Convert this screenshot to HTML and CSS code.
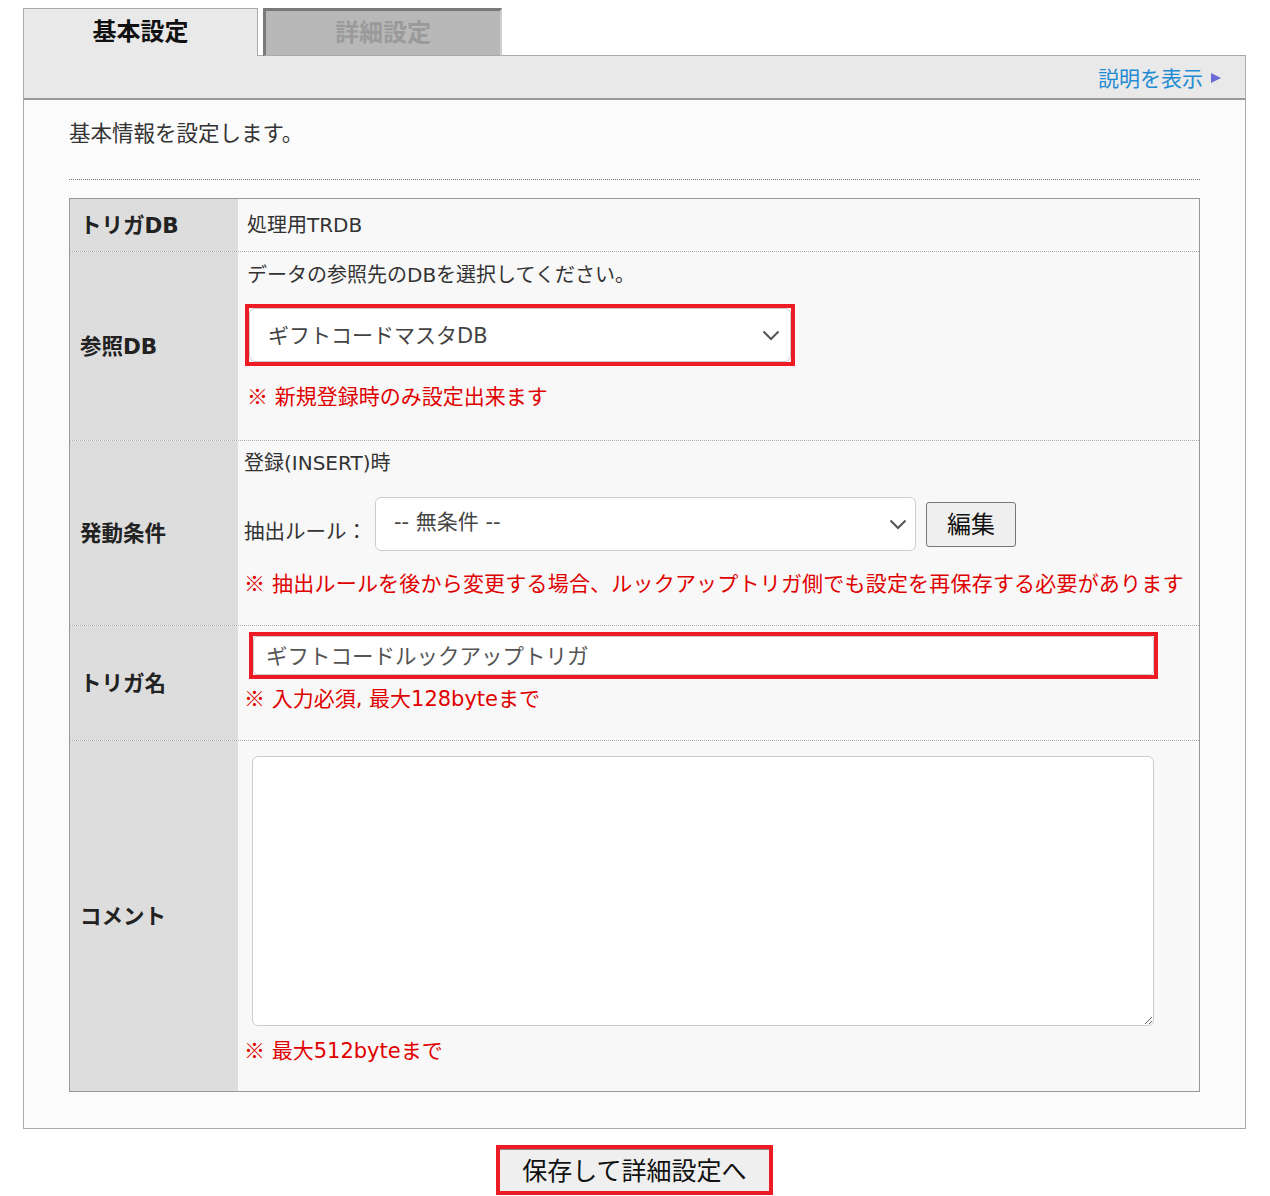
FILE: index.html
```html
<!DOCTYPE html>
<html lang="ja">
<head>
<meta charset="utf-8">
<title>基本設定</title>
<link rel="stylesheet" href="styles.css">
</head>
<body>
<div class="page">
  <div class="tabs">
    <div class="tab tab-active">基本設定</div>
    <div class="tab-gap"></div>
    <div class="tab tab-inactive">詳細設定</div>
    <div class="tab-fill"></div>
  </div>
  <div class="band">
    <a class="help-link" href="#">説明を表示<svg class="tri" width="12" height="12" viewBox="0 0 12 12"><polygon points="1,1 11,6 1,11" fill="#6a6ad8"/></svg></a>
  </div>
  <div class="panel">
    <p class="intro">基本情報を設定します。</p>
    <div class="dots"></div>
    <div class="table">
      <div class="row row-db">
        <div class="label">トリガDB</div>
        <div class="value value-a">処理用TRDB</div>
      </div>
      <div class="row row-ref">
        <div class="label">参照DB</div>
        <div class="value value-a">
          <div class="line">データの参照先のDBを選択してください。</div>
          <div class="redbox redbox-select">
            <div class="select select-ref">
              <span>ギフトコードマスタDB</span>
              <svg class="chev" width="18" height="11" viewBox="0 0 18 11"><polyline points="1.5,1.5 9,9 16.5,1.5" fill="none" stroke="#555" stroke-width="2"/></svg>
            </div>
          </div>
          <div class="note note-ref"><span class="kome">※</span> 新規登録時のみ設定出来ます</div>
        </div>
      </div>
      <div class="row row-cond">
        <div class="label">発動条件</div>
        <div class="value value-b">
          <div class="line">登録(INSERT)時</div>
          <div class="rule">
            <span class="rule-label">抽出ルール：</span>
            <div class="select select-rule">
              <span>-- 無条件 --</span>
              <svg class="chev" width="18" height="11" viewBox="0 0 18 11"><polyline points="1.5,1.5 9,9 16.5,1.5" fill="none" stroke="#555" stroke-width="2"/></svg>
            </div>
            <button class="btn-edit" type="button">編集</button>
          </div>
          <div class="note note-cond"><span class="kome">※</span> 抽出ルールを後から変更する場合、ルックアップトリガ側でも設定を再保存する必要があります</div>
        </div>
      </div>
      <div class="row row-name">
        <div class="label">トリガ名</div>
        <div class="value value-b">
          <div class="redbox redbox-input">
            <input class="text-input" type="text" value="ギフトコードルックアップトリガ">
          </div>
          <div class="note note-name"><span class="kome">※</span> 入力必須, 最大128byteまで</div>
        </div>
      </div>
      <div class="row row-comment">
        <div class="label">コメント</div>
        <div class="value value-b">
          <textarea class="comment"></textarea>
          <div class="note note-comment"><span class="kome">※</span> 最大512byteまで</div>
        </div>
      </div>
    </div>
  </div>
  <div class="actions">
    <div class="redbox redbox-save">
      <button class="btn-save" type="button">保存して詳細設定へ</button>
    </div>
  </div>
</div>
</body>
</html>
```

FILE: styles.css
```css
* {
  box-sizing: border-box;
}

body {
  margin: 0;
  background: #ffffff;
  font-family: "DejaVu Sans", "Noto Sans CJK JP", sans-serif;
  color: #333333;
}

.page {
  width: 1223px;
  margin: 0 0 0 23px;
  padding-top: 8px;
}

/* tabs */
.tabs {
  display: flex;
  height: 48px;
}

.tab {
  display: flex;
  align-items: center;
  justify-content: center;
  font-family: "Noto Sans CJK JP", sans-serif;
  font-size: 24px;
  font-weight: 700;
}

.tab-active {
  width: 235px;
  height: 48px;
  background: #e9e9e9;
  border: 1px solid #aaaaaa;
  border-bottom: none;
  color: #111111;
  padding-bottom: 6px;
}

.tab-gap {
  width: 5px;
  border-bottom: 1px solid #aaaaaa;
}

.tab-inactive {
  width: 239px;
  height: 48px;
  background: #b8b8b8;
  border-top: 3px solid #7a7a7a;
  border-left: 3px solid #7a7a7a;
  border-right: 2px solid #cfcfcf;
  border-bottom: 1px solid #aaaaaa;
  color: #9a9a9a;
  padding-bottom: 5px;
}

.tab-fill {
  flex: 1;
  border-bottom: 1px solid #aaaaaa;
}

/* band */
.band {
  height: 44px;
  background: #e9e9e9;
  border-left: 1px solid #aaaaaa;
  border-right: 1px solid #aaaaaa;
  border-bottom: 2px solid #999999;
  display: flex;
  align-items: center;
  justify-content: flex-end;
  padding-right: 23px;
  padding-top: 0;
}

.help-link {
  color: #1f8bd3;
  text-decoration: none;
  font-family: "Noto Sans CJK JP", sans-serif;
  font-size: 21px;
  display: flex;
  align-items: center;
  gap: 7px;
}

.tri {
  display: block;
  margin-top: 2px;
}

/* panel */
.panel {
  background: #fbfbfb;
  border: 1px solid #aaaaaa;
  border-top: none;
  padding: 17px 45px 36px 45px;
}

.intro {
  margin: 0;
  font-size: 21.5px;
  line-height: 33px;
  color: #333333;
}

.dots {
  margin-top: 29px;
  border-top: 1px dotted #777777;
}

.table {
  margin-top: 18px;
  border: 1px solid #999999;
}

.row {
  display: flex;
}

.row + .row {
  border-top: 1px dotted #aaaaaa;
}

.label {
  width: 168px;
  flex: none;
  background: #dddddd;
  display: flex;
  align-items: center;
  padding-left: 10px;
  padding-bottom: 4px;
  font-size: 21.5px;
  font-weight: 700;
  color: #222222;
}

.value {
  flex: 1;
  background: #f8f8f8;
  font-size: 20px;
  color: #333333;
}

.value-a {
  padding-left: 9px;
}

.value-b {
  padding-left: 6px;
}

.line {
  line-height: 28px;
}

.row-db .value {
  height: 52px;
  display: flex;
  align-items: center;
  padding-bottom: 3px;
}

.row-ref .value {
  padding-top: 9px;
  padding-bottom: 28px;
}

.redbox {
  border: 4px solid #ed1c24;
}

.redbox-select {
  width: 550px;
  margin-top: 15px;
  margin-left: -2px;
}

.select {
  display: flex;
  align-items: center;
  justify-content: space-between;
  background: #ffffff;
  border: 1px solid #cccccc;
  border-radius: 6px;
  color: #444444;
  font-size: 21px;
}

.select-ref {
  height: 54px;
  padding: 0 10px 2px 18px;
}

.select-rule {
  width: 541px;
  height: 54px;
  padding: 0 8px 8px 18px;
}

.chev {
  display: block;
  flex: none;
}

.select-ref .chev {
  margin-top: 2px;
}

.select-rule .chev {
  margin-top: 8px;
}

.note {
  color: #e00000;
  font-size: 21px;
  line-height: 30px;
}

.kome {
  font-family: "Noto Sans CJK JP", sans-serif;
  line-height: 16px;
}

.note-ref {
  margin-top: 16px;
}

.row-cond .value {
  padding-top: 8px;
  padding-bottom: 26px;
}

.rule {
  display: flex;
  align-items: flex-end;
  margin-top: 20px;
}

.rule-label {
  line-height: 28px;
  margin-bottom: 5px;
  margin-right: 8px;
  font-size: 20.5px;
}

.btn-edit {
  align-self: center;
  margin-left: 10px;
  width: 90px;
  height: 45px;
  background: #efefef;
  border: 1px solid #777777;
  border-radius: 3px;
  font-family: "Noto Sans CJK JP", sans-serif;
  font-size: 24px;
  color: #111111;
  padding: 0 0 3px 0;
}

.note-cond {
  margin-top: 18px;
  letter-spacing: 0.2px;
}

.row-name .value {
  padding-top: 6px;
  padding-bottom: 26px;
}

.redbox-input {
  width: 909px;
  margin-left: 5px;
}

.text-input {
  display: block;
  width: 100%;
  height: 39px;
  border: 1px solid #cccccc;
  border-radius: 4px;
  background: #ffffff;
  padding: 0 12px 2px 12px;
  font-family: "Noto Sans CJK JP", sans-serif;
  font-size: 21.5px;
  color: #555555;
}

.note-name {
  margin-top: 5px;
}

.row-comment .value {
  padding-top: 15px;
  padding-bottom: 25px;
}

.comment {
  display: block;
  width: 902px;
  height: 270px;
  margin-left: 8px;
  border: 1px solid #cccccc;
  border-radius: 6px;
  background: #ffffff;
  font-family: "Noto Sans CJK JP", sans-serif;
  font-size: 20px;
}

.note-comment {
  margin-top: 10px;
}

/* actions */
.actions {
  display: flex;
  justify-content: center;
  margin-top: 16px;
}

.redbox-save {
  width: 277px;
}

.btn-save {
  display: block;
  width: 100%;
  height: 42px;
  background: #efefef;
  border: none;
  border-top: 1px solid #888888;
  font-family: "Noto Sans CJK JP", sans-serif;
  font-size: 25px;
  color: #111111;
  padding: 0 0 3px 0;
}
```
